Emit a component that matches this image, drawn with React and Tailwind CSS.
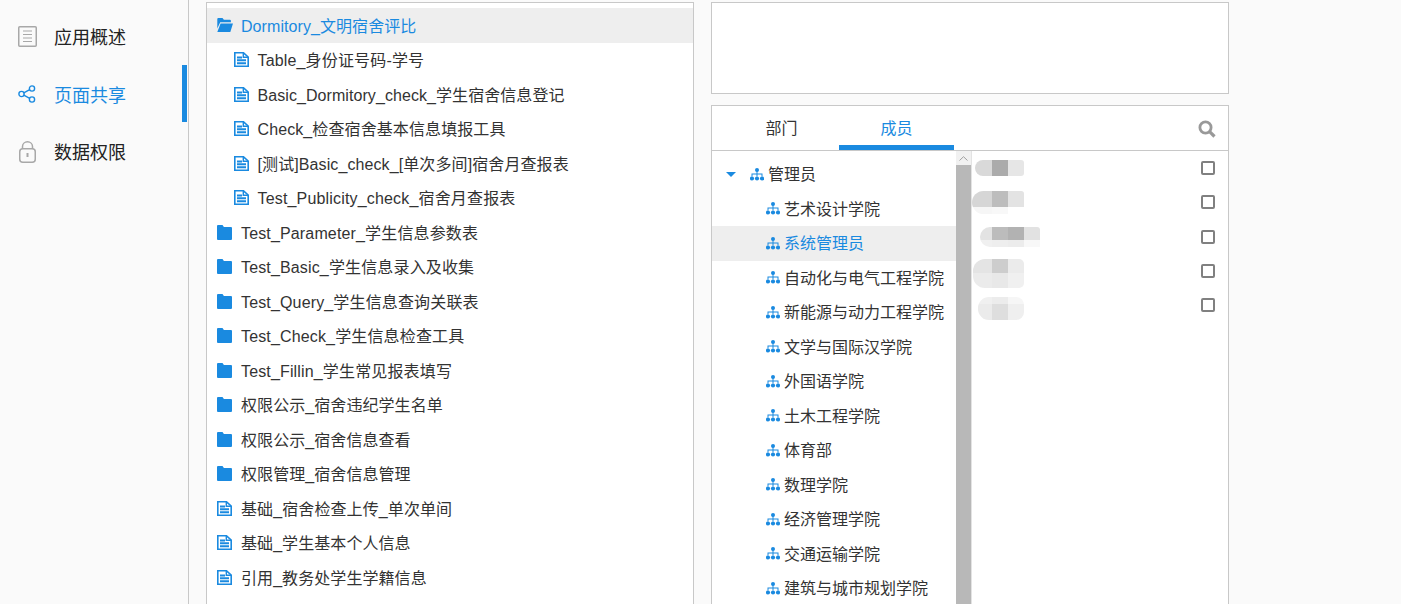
import React from "react";

const FONT = { fontFamily: '"Liberation Sans","Noto Sans CJK SC",sans-serif' };

function FolderOpen() {
  return (
    <svg width="16" height="14" viewBox="0 0 16 14" className="shrink-0">
      <path d="M0.3 1 a1 1 0 0 1 1-1 h4.2 l1.4 1.8 h6 a1 1 0 0 1 1 1 v1.4 H3.2 L0.3 10.5z" fill="#1a8ae0" />
      <path d="M3.6 5.4 H16 L13.3 14 H0.3z" fill="#1a8ae0" />
    </svg>
  );
}
function Folder() {
  return (
    <svg width="15" height="15" viewBox="0 0 15 15" className="shrink-0">
      <path d="M0 1 a1 1 0 0 1 1-1 h4.5 l1.4 2 H14 a1 1 0 0 1 1 1 V14 a1 1 0 0 1-1 1 H1 a1 1 0 0 1-1-1z" fill="#1a8ae0" />
    </svg>
  );
}
function Doc() {
  return (
    <svg width="15" height="15" viewBox="0 0 15 15" className="shrink-0" fill="none" stroke="#1a8ae0">
      <path d="M0.8 0.8 H9.5 L14.2 5 V14.2 H0.8z" strokeWidth="1.6" />
      <path d="M9.3 1 V5.2 H14" strokeWidth="1.4" />
      <path d="M3 5.5 H8 M3 8.2 H12 M3 11.2 H12" strokeWidth="2" />
    </svg>
  );
}
function Org() {
  return (
    <svg width="14" height="13" viewBox="0 0 14 13" className="shrink-0" fill="#1a8ae0">
      <circle cx="7" cy="2" r="2" />
      <circle cx="2" cy="10.5" r="2.1" />
      <circle cx="7" cy="10.5" r="2.1" />
      <circle cx="12" cy="10.5" r="2.1" />
      <path d="M6.5 3 h1 v2.5 h5 v3 h-1 v-2 h-4 v2 h-1 v-2 h-4 v2 h-1 v-3 h5z" />
    </svg>
  );
}

function NavItem({ label, active, icon }) {
  return (
    <div className="relative flex h-[57.5px] items-center">
      <div className="flex w-[54px] justify-center pl-[.5px]">{icon}</div>
      <span className={`pt-[4px] text-[18px] ${active ? "text-[#1a8ae0]" : "text-[#222]"}`}>{label}</span>
      {active && <div className="absolute right-[1px] -top-[0.5px] h-[57px] w-[5px] bg-[#1a8ae0]" />}
    </div>
  );
}

function Row({ label, icon, indent, active, selected, gap, track }) {
  return (
    <div className={`flex h-[34.5px] items-center ${selected ? "bg-[#eeeeee]" : ""} ${indent}`}>
      {icon}
      <span
        className={`whitespace-nowrap pt-[3px] text-[16px] ${gap} ${track} ${active ? "text-[#1a8ae0]" : "text-[#333]"}`}
      >
        {label}
      </span>
    </div>
  );
}

const files = [
  ["Table_身份证号码-学号", "doc", 1, "tracking-[0.16px]"],
  ["Basic_Dormitory_check_学生宿舍信息登记", "doc", 1, "tracking-[0.07px]"],
  ["Check_检查宿舍基本信息填报工具", "doc", 1, "tracking-[0.1px]"],
  ["[测试]Basic_check_[单次多间]宿舍月查报表", "doc", 1, "tracking-[0.1px]"],
  ["Test_Publicity_check_宿舍月查报表", "doc", 1, "tracking-[0.17px]"],
  ["Test_Parameter_学生信息参数表", "folder", 0, "tracking-[0.15px]"],
  ["Test_Basic_学生信息录入及收集", "folder", 0, "tracking-[0.15px]"],
  ["Test_Query_学生信息查询关联表", "folder", 0, "tracking-[0.15px]"],
  ["Test_Check_学生信息检查工具", "folder", 0, "tracking-[0.15px]"],
  ["Test_Fillin_学生常见报表填写", "folder", 0, "tracking-[0.15px]"],
  ["权限公示_宿舍违纪学生名单", "folder", 0, "tracking-[0.07px]"],
  ["权限公示_宿舍信息查看", "folder", 0, "tracking-[0.07px]"],
  ["权限管理_宿舍信息管理", "folder", 0, "tracking-[0.07px]"],
  ["基础_宿舍检查上传_单次单间", "doc", 0, "tracking-[0.1px]"],
  ["基础_学生基本个人信息", "doc", 0, "tracking-[0.07px]"],
  ["引用_教务处学生学籍信息", "doc", 0, "tracking-[0.07px]"],
];

const depts = [
  "艺术设计学院",
  "系统管理员",
  "自动化与电气工程学院",
  "新能源与动力工程学院",
  "文学与国际汉学院",
  "外国语学院",
  "土木工程学院",
  "体育部",
  "数理学院",
  "经济管理学院",
  "交通运输学院",
  "建筑与城市规划学院",
];

// Mosaic blocks that hide the member names: each band is [height, colours].
const members = [
  { ml: "ml-[3px]", first: "w-[17px]", box: "rounded-l-[8px] rounded-r-[3px]", mt: "", bands: [[16, ["#d9d9d9", "#ababab", "#e6e6e6"]]] },
  { ml: "ml-0", first: "w-[20px]", box: "rounded-l-[12px] rounded-r-[3px]", mt: "mt-[1px]", bands: [[16, ["#d6d6d6", "#bdbdbd", "#e3e3e3"]], [7, ["#f6f6f6", "#f8f8f8", "#ffffff"]]] },
  { ml: "ml-[8px]", first: "w-[12px]", box: "rounded-l-[10px] rounded-tr-[3px]", mt: "mt-[1px]", bands: [[13, ["#e3e3e3", "#bcbcbc", "#b2b2b2", "#e2e2e2"]], [7, ["#f0f0f0", "#eeeeee", "#ececec", "#f8f8f8"]]] },
  { ml: "ml-[1px]", first: "w-[19px]", box: "rounded-l-[12px] rounded-r-[5px]", mt: "mt-[4px]", bands: [[14, ["#e4e4e4", "#cdcdcd", "#ebebeb"]], [15, ["#ebebeb", "#e8e8e8", "#f0f0f0"]]] },
  { ml: "ml-[6px]", first: "w-[14px]", box: "rounded-l-[11px] rounded-r-[8px]", mt: "mt-[7px]", bands: [[7, ["#f0f0f0", "#ececec", "#f6f6f6"]], [16, ["#ebebeb", "#dedede", "#efefef"]]] },
];

export default function App() {
  return (
    <div className="flex h-[604px] w-[1401px] overflow-hidden bg-[#fafafa]" style={FONT}>
      <aside className="h-full w-[189px] shrink-0 border-r border-[#c8c8c8] pt-[8px]">
        <NavItem
          label="应用概述"
          icon={
            <svg width="19" height="21" viewBox="0 0 19 21" fill="none" stroke="#a8a8a8">
              <rect x="0.75" y="0.75" width="17.5" height="19.5" rx="1" strokeWidth="1.5" />
              <path d="M5 5 H14 M5 8.5 H14 M5 12 H14 M5 15.5 H14" strokeWidth="1" />
            </svg>
          }
        />
        <NavItem
          active
          label="页面共享"
          icon={
            <svg width="18" height="18" viewBox="0 0 18 18" fill="none" stroke="#1a8ae0" strokeWidth="1.4">
              <circle cx="3.5" cy="9" r="2.6" />
              <circle cx="14" cy="3.5" r="2.6" />
              <circle cx="14" cy="14.5" r="2.6" />
              <path d="M5.8 7.8 L11.7 4.7 M5.8 10.2 L11.7 13.3" />
            </svg>
          }
        />
        <NavItem
          label="数据权限"
          icon={
            <svg width="17" height="22" viewBox="0 0 17 22" fill="none" stroke="#a8a8a8" strokeWidth="1.5">
              <rect x="0.75" y="7.75" width="15.5" height="13.5" rx="3" />
              <path d="M3.5 8 V5.5 a5 4.7 0 0 1 10 0 V8" />
              <path d="M8.5 12 V16" strokeWidth="2" />
            </svg>
          }
        />
      </aside>

      <div className="flex-1 pl-[17px] pt-[2px]">
        <div className="flex">
          <section className="h-[700px] w-[488px] shrink-0 border border-[#c8c8c8] bg-white pt-[5px]">
            <Row
              label="Dormitory_文明宿舍评比"
              icon={<FolderOpen />}
              indent="pl-[10px]"
              gap="ml-[8px]"
              track="tracking-[0.07px]"
              active
              selected
            />
            {files.map(([label, type, nested, track]) => (
              <Row
                key={label}
                label={label}
                icon={type === "doc" ? <Doc /> : <Folder />}
                indent={nested ? "pl-[27px]" : "pl-[10px]"}
                gap={nested ? "ml-[8.5px]" : "ml-[9px]"}
                track={track}
              />
            ))}
          </section>

          <div className="ml-[17px] w-[518px] shrink-0">
            <div className="h-[92px] border border-[#c8c8c8] bg-white" />
            <section className="mt-[11px] h-[700px] border border-[#c8c8c8] bg-white">
              <div className="relative flex h-[45px] border-b border-[#c8c8c8] pl-[12px]">
                <div className="flex h-[44px] w-[115px] items-center justify-center pt-[1px] text-[16px] text-[#333]">部门</div>
                <div className="flex h-[44px] w-[115px] items-center justify-center border-b-[5px] border-[#1a8ae0] pt-[6px] text-[16px] text-[#1a8ae0]">
                  成员
                </div>
                <svg className="absolute right-[12px] top-[14px]" width="18" height="18" viewBox="0 0 18 18" fill="none" stroke="#999999">
                  <circle cx="7.5" cy="7.5" r="5.6" strokeWidth="2.8" />
                  <path d="M11.6 11.6 L16.5 16.5" strokeWidth="3.2" />
                </svg>
              </div>
              <div className="flex">
                <div className="w-[244px] shrink-0 pt-[6px]">
                  <div className="flex h-[34.5px] items-center pl-[14px]">
                    <svg width="10" height="5" viewBox="0 0 10 5" className="mr-[14px] shrink-0" fill="#1a8ae0">
                      <path d="M0 0 H10 L5 5z" />
                    </svg>
                    <Org />
                    <span className="ml-[4px] pt-[2px] text-[16px] text-[#333]">管理员</span>
                  </div>
                  {depts.map((d, i) => (
                    <div key={d} className={`flex h-[34.5px] items-center pl-[54px] ${i === 1 ? "bg-[#eeeeee]" : ""}`}>
                      <Org />
                      <span className={`ml-[4px] whitespace-nowrap pt-[2px] text-[16px] ${i === 1 ? "text-[#1a8ae0]" : "text-[#333]"}`}>{d}</span>
                    </div>
                  ))}
                </div>
                <div className="h-[600px] w-[15px] shrink-0 bg-[#f1f1f1]">
                  <div className="flex h-[14px] items-center justify-center">
                    <svg width="9" height="5" viewBox="0 0 9 5" fill="none" stroke="#a0a0a0">
                      <path d="M0.5 4.5 L4.5 0.7 L8.5 4.5" />
                    </svg>
                  </div>
                  <div className="h-[586px] bg-[#b8b8b8]" />
                </div>
                <div className="flex-1 border-l border-[#e3e3e3]">
                  {members.map((m, i) => (
                    <div key={i} className="flex h-[34.3px] items-center pr-[13px]">
                      <div className={`flex flex-col overflow-hidden ${m.box} ${m.ml} ${m.mt}`}>
                        {m.bands.map(([h, cells], b) => (
                          <div key={b} className="flex" style={{ height: h }}>
                            {cells.map((c, j) => (
                              <div key={j} className={j === 0 ? m.first : "w-[16px]"} style={{ background: c }} />
                            ))}
                          </div>
                        ))}
                      </div>
                      <div className="ml-auto h-[14px] w-[14px] rounded-[2px] border-2 border-[#808080]" />
                    </div>
                  ))}
                </div>
              </div>
            </section>
          </div>
        </div>
      </div>
    </div>
  );
}
